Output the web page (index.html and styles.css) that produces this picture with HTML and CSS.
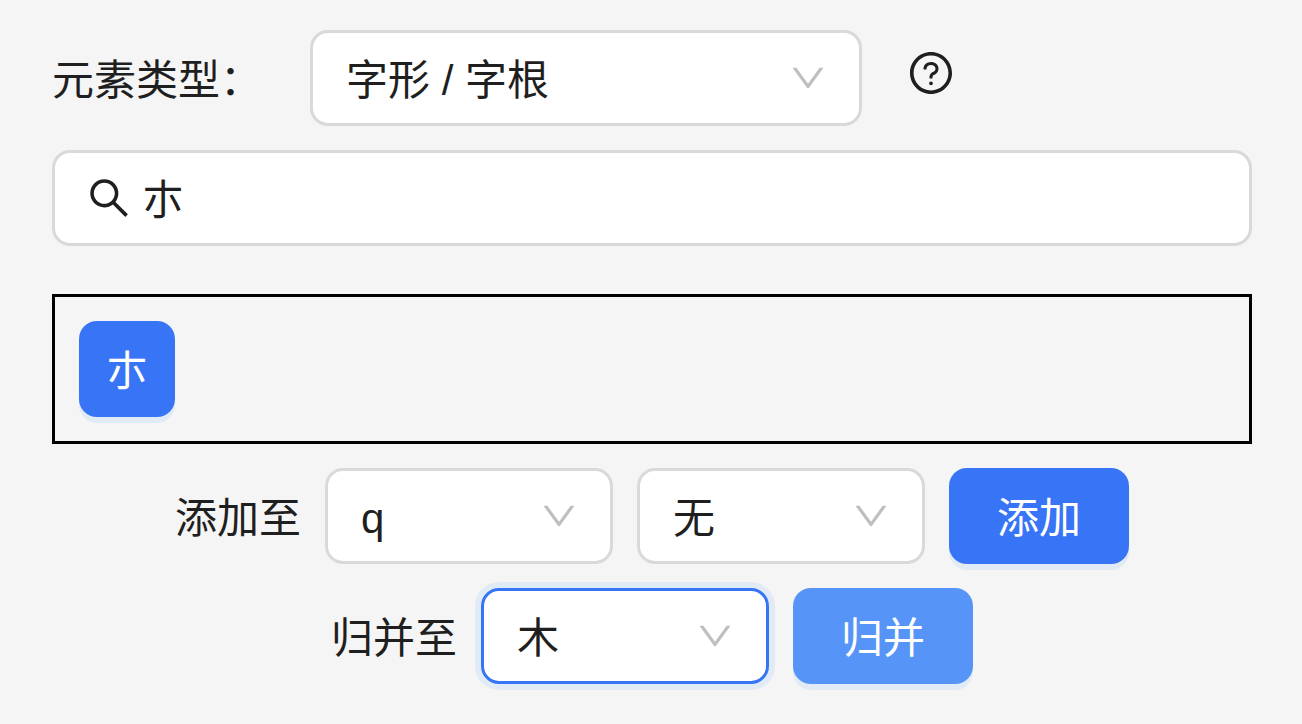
FILE: index.html
```html
<!DOCTYPE html>
<html lang="zh-CN">
<head>
<meta charset="utf-8">
<meta name="viewport" content="width=device-width, initial-scale=1">
<title>元素类型</title>
<link rel="stylesheet" href="styles.css">
</head>
<body>
<svg class="sprite" aria-hidden="true">
  <symbol id="down" viewBox="64 64 896 896"><path d="M884 256h-75c-5.100 0-9.900 2.500-12.900 6.600L512 654.200 227.900 262.600c-3-4.100-7.800-6.600-12.900-6.600h-75c-6.500 0-10.300 7.400-6.500 12.700l352.600 486.100c12.800 17.600 39 17.600 51.700 0l352.600-486.100c3.900-5.300.1-12.700-6.400-12.700z"/></symbol>
</svg>
<main class="panel">
  <div class="row type-row">
    <label class="label" for="type">元素类型：</label>
    <div class="select select-wide">
      <select id="type"><option>字形 / 字根</option></select>
      <svg class="arrow" aria-hidden="true"><use href="#down"/></svg>
    </div>
    <button class="help" type="button" aria-label="帮助">
      <svg class="icon" viewBox="64 64 896 896" aria-hidden="true"><path d="M512 64C264.600 64 64 264.600 64 512s200.600 448 448 448 448-200.600 448-448S759.400 64 512 64zm0 820c-205.400 0-372-166.600-372-372s166.600-372 372-372 372 166.600 372 372-166.600 372-372 372z"/><path d="M623.600 316.700C593.600 290.400 554 276 512 276s-81.600 14.500-111.600 40.700C369.200 344 352 380.700 352 420v7.600c0 4.400 3.600 8 8 8h48c4.400 0 8-3.600 8-8V420c0-44.100 43.100-80 96-80s96 35.900 96 80c0 31.100-22 59.600-56.100 72.700-21.200 8.100-39.200 22.300-52.100 40.900-13.100 19-19.900 41.800-19.900 64.900V620c0 4.400 3.600 8 8 8h48c4.400 0 8-3.600 8-8v-22.700a48.300 48.300 0 0 1 30.900-44.800c59-22.700 97.100-74.700 97.100-132.500.1-39.300-17.100-76-48.300-103.300zM472 732a40 40 0 1 0 80 0 40 40 0 1 0-80 0z"/></svg>
    </button>
  </div>

  <div class="search">
    <svg class="icon" viewBox="64 64 896 896" aria-hidden="true"><path d="M909.600 854.500L649.900 594.800C690.200 542.700 712 479 712 412c0-80.200-31.300-155.400-87.900-212.100-56.600-56.700-132-87.900-212.100-87.900s-155.500 31.300-212.100 87.900C143.200 256.500 112 331.800 112 412c0 80.100 31.300 155.500 87.900 212.100C256.500 680.800 331.800 712 412 712c67 0 130.600-21.800 182.700-62l259.700 259.600a8.200 8.200 0 0 0 11.600 0l43.600-43.500a8.200 8.200 0 0 0 0-11.600zM570.400 570.400C528 612.700 471.800 636 412 636s-116-23.300-158.400-65.600C211.300 528 188 471.800 188 412s23.300-116.100 65.600-158.400C296 211.300 352.200 188 412 188s116.100 23.200 158.400 65.600S636 352.200 636 412s-23.300 116.100-65.600 158.400z"/></svg>
    <input class="search-input" type="text" value="朩" aria-label="搜索">
  </div>

  <div class="results">
    <button class="btn btn-tile" type="button">朩</button>
  </div>

  <div class="row action-row">
    <label class="label" for="key">添加至</label>
    <div class="select">
      <select id="key"><option>q</option></select>
      <svg class="arrow" aria-hidden="true"><use href="#down"/></svg>
    </div>
    <div class="select">
      <select aria-label="次码"><option>无</option></select>
      <svg class="arrow" aria-hidden="true"><use href="#down"/></svg>
    </div>
    <button class="btn" type="button">添加</button>
  </div>

  <div class="row action-row">
    <label class="label" for="merge">归并至</label>
    <div class="select select-active">
      <select id="merge"><option>木</option></select>
      <svg class="arrow" aria-hidden="true"><use href="#down"/></svg>
    </div>
    <button class="btn btn-light" type="button">归并</button>
  </div>
</main>
</body>
</html>
```
FILE: styles.css
```css
* {
  box-sizing: border-box;
}

body {
  margin: 0;
  background: #f5f5f5;
  color: #1f1f1f;
  font-family: "Liberation Sans", "Noto Sans CJK SC", sans-serif;
  font-size: 42px;
  line-height: 66px;
}

button,
input,
select {
  margin: 0;
  font: inherit;
  color: inherit;
}

.sprite {
  display: none;
}

.panel {
  display: flex;
  flex-direction: column;
  gap: 24px;
  padding: 30px 50px 40px 52px;
}

.row {
  display: flex;
  align-items: center;
  gap: 24px;
}

.type-row {
  gap: 48px;
}

.action-row {
  justify-content: center;
}

.label {
  flex: none;
  padding-top: 6px;
  white-space: nowrap;
}

.select {
  display: grid;
  align-items: center;
  width: 288px;
}

.select-wide {
  width: 552px;
}

.select select,
.select .arrow {
  grid-area: 1 / 1;
}

.select select {
  appearance: none;
  width: 100%;
  height: 96px;
  padding: 6px 72px 0 33px;
  border: 3px solid #d9d9d9;
  border-radius: 18px;
  background: #fff;
  outline: none;
}

.select-active select {
  border-color: #3875f6;
  box-shadow: 0 0 0 6px rgba(5, 125, 255, 0.08);
}

.arrow {
  justify-self: end;
  width: 36px;
  height: 36px;
  margin-right: 36px;
  fill: #bfbfbf;
  pointer-events: none;
}

.icon {
  display: block;
  flex: none;
  width: 42px;
  height: 42px;
  fill: currentColor;
}

.help {
  padding: 0;
  margin-bottom: 10px;
  border: 0;
  background: none;
}

.search {
  display: flex;
  align-items: center;
  gap: 12px;
  height: 96px;
  padding: 0 33px;
  border: 3px solid #d9d9d9;
  border-radius: 18px;
  background: #fff;
}

.search-input {
  flex: 1;
  min-width: 0;
  padding: 6px 0 0;
  border: 0;
  background: none;
  outline: none;
}

.results {
  display: flex;
  flex-wrap: wrap;
  gap: 24px;
  margin-top: 24px;
  padding: 24px;
  border: 3px solid #000;
}

.btn {
  height: 96px;
  padding: 6px 48px 0;
  border: 0;
  border-radius: 18px;
  background: #3875f6;
  box-shadow: 0 6px 0 rgba(5, 125, 255, 0.08);
  color: #fff;
}

.btn-tile {
  width: 96px;
  padding: 6px 0 0;
}

.btn-light {
  background: #5794f7;
}
```
